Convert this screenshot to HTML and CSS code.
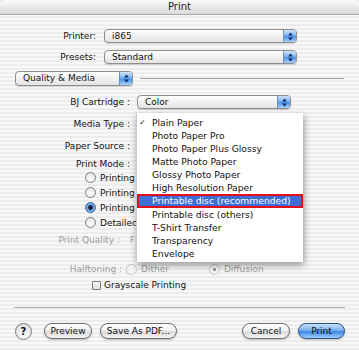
FILE: index.html
```html
<!DOCTYPE html>
<html lang="en">
<head>
  <meta charset="UTF-8">
  <title>Print</title>
  <link rel="stylesheet" href="styles.css">
</head>
<body>

  <div class="window">
    <div class="titlebar">Print</div>

    <div class="content">
      <div class="field field-top">
        <div class="label label-top">Printer:</div>
        <div class="popup popup-wide">
          <span class="popup-text">i865</span>
          <span class="popup-arrows">
            <svg width="7" height="9" viewBox="0 0 7 9"><path d="M3.5 0.5 L6 3.5 H1 Z M3.5 8.5 L6 5.5 H1 Z" fill="#0d2f66"/></svg>
          </span>
        </div>
      </div>

      <div class="field field-top field-presets">
        <div class="label label-top">Presets:</div>
        <div class="popup popup-wide">
          <span class="popup-text">Standard</span>
          <span class="popup-arrows">
            <svg width="7" height="9" viewBox="0 0 7 9"><path d="M3.5 0.5 L6 3.5 H1 Z M3.5 8.5 L6 5.5 H1 Z" fill="#0d2f66"/></svg>
          </span>
        </div>
      </div>

      <div class="section-head">
        <div class="popup popup-section">
          <span class="popup-text">Quality &amp; Media</span>
          <span class="popup-arrows">
            <svg width="7" height="9" viewBox="0 0 7 9"><path d="M3.5 0.5 L6 3.5 H1 Z M3.5 8.5 L6 5.5 H1 Z" fill="#0d2f66"/></svg>
          </span>
        </div>
        <div class="section-line"></div>
      </div>

      <div class="field field-bj">
        <div class="label label-media">BJ Cartridge :</div>
        <div class="popup popup-media">
          <span class="popup-text">Color</span>
          <span class="popup-arrows">
            <svg width="7" height="9" viewBox="0 0 7 9"><path d="M3.5 0.5 L6 3.5 H1 Z M3.5 8.5 L6 5.5 H1 Z" fill="#0d2f66"/></svg>
          </span>
        </div>
      </div>

      <div class="field field-type">
        <div class="label label-media">Media Type :</div>
      </div>

      <div class="field field-source">
        <div class="label label-media">Paper Source :</div>
      </div>

      <div class="field field-mode">
        <div class="label label-media">Print Mode :</div>
      </div>

      <!-- rows end where the open menu starts -->
      <div class="radios">
        <div class="radio-row"><span class="radio"></span>Printing a high-quality photo</div>
        <div class="radio-row"><span class="radio"></span>Printing tables and charts</div>
        <div class="radio-row"><span class="radio radio-on"></span>Printing a composite document</div>
        <div class="radio-row"><span class="radio"></span>Detailed Setting</div>
      </div>

      <div class="field field-quality">
        <div class="label label-quality disabled">Print Quality :</div>
        <span class="tick disabled">F</span>
      </div>

      <div class="field field-halftone">
        <div class="label label-halftone disabled">Halftoning :</div>
        <div class="option disabled"><span class="radio radio-dim"></span>Dither</div>
        <div class="option option-diffusion disabled"><span class="radio radio-dim radio-dot"></span>Diffusion</div>
      </div>

      <div class="check-row">
        <span class="checkbox"></span>Grayscale Printing
      </div>

      <div class="separator"></div>

      <div class="buttons">
        <span class="help">?</span>
        <button class="btn btn-preview">Preview</button>
        <button class="btn btn-pdf">Save As PDF...</button>
        <span class="spacer"></span>
        <button class="btn btn-cancel">Cancel</button>
        <button class="btn btn-print">Print</button>
      </div>
    </div>

    <!-- open Media Type menu -->
    <div class="menu">
      <div class="menu-item"><span class="check">✓</span>Plain Paper</div>
      <div class="menu-item">Photo Paper Pro</div>
      <div class="menu-item">Photo Paper Plus Glossy</div>
      <div class="menu-item">Matte Photo Paper</div>
      <div class="menu-item">Glossy Photo Paper</div>
      <div class="menu-item">High Resolution Paper</div>
      <div class="menu-item menu-item-active">Printable disc (recommended)</div>
      <div class="menu-item">Printable disc (others)</div>
      <div class="menu-item">T-Shirt Transfer</div>
      <div class="menu-item">Transparency</div>
      <div class="menu-item">Envelope</div>
    </div>
  </div>

</body>
</html>
```

FILE: styles.css
```css
* { box-sizing: border-box; }

body {
  margin: 0;
  font-family: 'DejaVu Sans', 'Liberation Sans', sans-serif;
  font-size: 9px;
  color: #111;
  background: #fff;
}

.window {
  position: relative;
  width: 359px;
  height: 350px;
  overflow: hidden;
  background: repeating-linear-gradient(#ededed 0 2px, #f8f8f8 2px 4px);
}

.titlebar {
  height: 15px;
  line-height: 14px;
  text-align: center;
  font-size: 10px;
  color: #222;
  border-radius: 6px 6px 0 0;
  border-bottom: 1px solid #a8a8a8;
  background: linear-gradient(#fbfbfb, #e6e6e6 60%, #dcdcdc);
}

.content {
  padding: 0 14px;
}

.field {
  display: flex;
  align-items: center;
  height: 14px;
}

.label {
  flex: none;
  text-align: right;
  white-space: nowrap;
}

.disabled {
  color: #9c9c9c;
}

.field-top { margin-top: 14px; }
.field-presets { margin-top: 7px; }
.label-top { width: 82px; margin-right: 8px; }

.field-bj { margin-top: 9px; }
.field-type { margin-top: 8px; }
.field-source { margin-top: 8px; }
.field-mode { margin-top: 4px; height: 13px; }
.label-media { width: 116px; margin-right: 7px; }

/* aqua popup */
.popup {
  display: flex;
  height: 14px;
  border: 1px solid #8e8e8e;
  border-radius: 4px;
  background: linear-gradient(#ffffff, #f1f1f1 50%, #e4e4e4);
  box-shadow: 0 1px 1px rgba(0, 0, 0, 0.15);
  overflow: hidden;
}

.popup-text {
  flex: 1;
  padding-left: 7px;
  line-height: 12px;
  white-space: nowrap;
}

.popup-arrows {
  flex: none;
  width: 13px;
  display: flex;
  align-items: center;
  justify-content: center;
  border-left: 1px solid #6e8fc0;
  background: linear-gradient(#cfe4fb, #7fb4ee 45%, #4b90e6 55%, #a8d3fb);
}

.popup-wide { width: 193px; }
.popup-media { width: 154px; }

.section-head {
  display: flex;
  align-items: center;
  margin-top: 7px;
  height: 15px;
}

.popup-section {
  width: 118px;
  height: 15px;
  margin-left: 1px;
}

.popup-section .popup-text { line-height: 13px; }

.section-line {
  flex: 1;
  height: 1px;
  margin: 0 1px 0 7px;
  background: #a3a3a3;
}

/* radios */
.radios {
  padding-left: 71px;
}

.radio-row {
  display: flex;
  align-items: center;
  width: 51px;
  height: 15px;
  overflow: hidden;
  white-space: nowrap;
}

.radio {
  flex: none;
  width: 11px;
  height: 11px;
  margin-right: 4px;
  border: 1px solid #7c7c7c;
  border-radius: 50%;
  background: radial-gradient(circle at 50% 70%, #ffffff, #dedede);
}

.radio-on {
  border-color: #3a5f96;
  background: radial-gradient(circle, #17233a 0 2px, #5d98e0 2.5px, #a9cdf6);
}

.radio-dim {
  border-color: #c4c4c4;
  background: #f4f4f4;
}

.radio-dot {
  background: radial-gradient(circle, #9a9a9a 0 1.5px, #f4f4f4 2px);
}

.field-quality { margin-top: 3px; }
.label-quality { width: 106px; margin-right: 10px; }

.tick {
  font-size: 8px;
}

.field-halftone { margin-top: 15px; }
.label-halftone { width: 108px; margin-right: 4px; }

.option {
  display: flex;
  align-items: center;
}

.option-diffusion { margin-left: 40px; }

.check-row {
  display: flex;
  align-items: center;
  height: 14px;
  margin-top: 2px;
  padding-left: 78px;
}

.checkbox {
  width: 9px;
  height: 9px;
  margin-right: 3px;
  border: 1px solid #7a7a7a;
  border-radius: 1px;
  background: linear-gradient(#fafafa, #dedede);
}

.separator {
  height: 1px;
  margin-top: 15px;
  background: #a8a8a8;
}

/* buttons */
.buttons {
  display: flex;
  align-items: center;
  margin-top: 15px;
  height: 16px;
}

.spacer { flex: 1; }

.help {
  width: 17px;
  height: 17px;
  margin-left: 1px;
  margin-right: 12px;
  border: 1px solid #7a7a7a;
  border-radius: 50%;
  text-align: center;
  line-height: 15px;
  font-weight: bold;
  font-size: 10px;
  background: radial-gradient(circle at 50% 75%, #ffffff, #d7d7d7);
}

.btn {
  height: 16px;
  padding: 0;
  font-family: inherit;
  font-size: 9px;
  color: #111;
  border: 1px solid #6f6f6f;
  border-radius: 8px;
  background: linear-gradient(#ffffff, #eeeeee 50%, #dadada 55%, #f4f4f4);
  box-shadow: 0 1px 2px rgba(0, 0, 0, 0.25);
}

.btn-preview { width: 48px; margin-right: 8px; }
.btn-pdf { width: 77px; }
.btn-cancel { width: 48px; margin-right: 8px; }

.btn-print {
  width: 47px;
  border-color: #2d4f8c;
  background: linear-gradient(#c8e2fb, #78b1f0 45%, #3d86e6 55%, #9fd0ff);
}

/* open menu */
.menu {
  position: absolute;
  left: 136px;
  top: 113px;
  width: 167px;
  padding: 3px 0 2px;
  background: rgba(255, 255, 255, 0.96);
  border-left: 1px solid #c9c9c9;
  box-shadow: 1px 3px 7px rgba(0, 0, 0, 0.4);
}

.menu-item {
  position: relative;
  height: 13px;
  line-height: 13px;
  padding-left: 15px;
  font-size: 9.2px;
  white-space: nowrap;
}

.check {
  position: absolute;
  left: 2px;
  top: 0;
  font-size: 8px;
}

.menu-item-active {
  color: #fff;
  background: #3d6ed5;
  border: 2px solid #e3101c;
  line-height: 10px;
  height: 14px;
  padding-left: 13px;
}
```
